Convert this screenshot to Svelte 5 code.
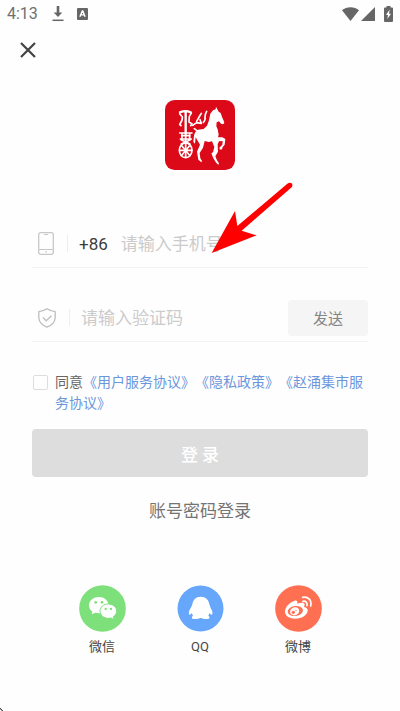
<script>
  let phone = $state('');
  let code = $state('');
  let agreed = $state(false);
</script>

<div class="page">
  <header class="status">
    <span class="time">4:13</span>
    <svg class="download" width="12" height="16" viewBox="0 0 12 16" aria-hidden="true">
      <path d="M4.700 0h2.600v6.500h3L6 11 1.700 6.500h3z" fill="#666" />
      <path d="M.5 14.300h11" stroke="#666" stroke-width="1.500" />
    </svg>
    <svg width="11" height="12" viewBox="0 0 11 12" aria-hidden="true">
      <rect width="11" height="12" rx="1" fill="#666" />
      <path d="M2.900 8.800 5.300 3h.5l2.300 5.800M3.800 6.900h3.500" fill="none" stroke="#fff" stroke-width="1.400" />
    </svg>
    <div class="signals">
      <svg width="17" height="14" viewBox="0 0 17 14" aria-hidden="true">
        <path d="M0 3.200C4.500-.9 12.500-.9 17 3.200L8.500 14z" fill="#666" />
      </svg>
      <svg width="14" height="14" viewBox="0 0 14 14" aria-hidden="true">
        <path d="M14 0v14H0z" fill="#666" />
      </svg>
      <svg class="battery" width="9" height="16" viewBox="0 0 9 16" aria-hidden="true">
        <path d="M2.500 0h4v1.500H8q1 0 1 1V15q0 1-1 1H1q-1 0-1-1V2.500q0-1 1-1h1.500z" fill="#666" />
        <path d="M5.700 3.500 2 9h2l-.7 4L7 7.700H5z" fill="#fff" />
      </svg>
    </div>
  </header>

  <button class="close" type="button" aria-label="关闭">
    <svg width="16" height="16" viewBox="0 0 16 16" aria-hidden="true">
      <path d="m1 1 14 14M15 1 1 15" stroke="#444" stroke-width="2.200" />
    </svg>
  </button>

  <svg class="logo" width="70" height="70" viewBox="15 15 210 210" aria-hidden="true">
    <rect x="15" y="15" width="210" height="210" rx="29" fill="#dc0a19" />
    <g transform="translate(36 21)">
      <path
        d="M132 14l-1 8-8 3-8 10-4 20-6 16-10 10-17 2-8 7-4 10-2 20 5 5 2-19 6 10 7 12-9 21 4 24 9 8 2-4-5-8-2-16 10-16 5-20 12 3 10-2 7 17-4 16-5 3 6 15 9 14 6 5 2-4-6-9-5-12 8-14-1-22 4-9 11-1-1 11-9 9 2 6 6-1 2-7 6-7 2-17-9-5-13 0 2-8-3-16-4-9 1-12 7-3 6 7 6 2 4-4-2-7-4-9-5-14-6-4z"
        fill="#fff"
      />
      <g fill="none" stroke="#fff" stroke-linecap="round" stroke-linejoin="round">
        <path d="M24 31q16-7 32 0M41 31v64" stroke-width="7" />
        <path d="M23 35l5 6M58 33l-4 7M31 44q1 13-8 23l4 4M52 43l-1 17 9 5-4 6" stroke-width="5" />
        <path d="M62 70l12-8 14 2-4-11M74 58l9-16 5-8M104 28q-5 8-5 17 2 9-5 16M67 80l11 8" stroke-width="5" />
        <path d="M23 93h37M25 111h33M30 94v18M53 94v18M29 101h25M27 113l27 13M55 113l-27 13M41 96v70" stroke-width="5" />
        <ellipse cx="41" cy="145" rx="19" ry="22" stroke-width="5" />
        <path d="M23 145h36M28 130l26 31M54 130l-26 31" stroke-width="5" />
      </g>
    </g>
  </svg>

  <form onsubmit={(e) => e.preventDefault()}>
    <div class="field">
      <label for="phone" aria-label="手机号">
        <svg width="16" height="23" viewBox="0 0 16 23" fill="none" stroke="#c8c8c8" aria-hidden="true">
          <rect x=".7" y=".7" width="14.600" height="21.600" rx="2" stroke-width="1.300" />
          <path d="M1 17.500h14M6 2.500h4M7 19.800h2" />
        </svg>
      </label>
      <span class="divider"></span>
      <span class="prefix">+86</span>
      <input id="phone" type="tel" placeholder="请输入手机号" bind:value={phone} />
    </div>

    <div class="field code">
      <label for="code" aria-label="验证码">
        <svg width="18" height="20" viewBox="0 0 18 20" fill="none" stroke="#bdbdbd" stroke-width="1.300" stroke-linejoin="round" aria-hidden="true">
          <path d="M9 .8Q12.500 3.300 17.200 3.600V10Q16.600 16 9 19.200 1.400 16 .8 10V3.600Q5.500 3.300 9 .8z" />
          <path d="m5 9.500 3.200 3.200 5.300-5" />
        </svg>
      </label>
      <span class="divider"></span>
      <input id="code" type="text" placeholder="请输入验证码" bind:value={code} />
      <button class="send" type="button">发送</button>
    </div>

    <div class="agreement">
      <input id="agree" type="checkbox" bind:checked={agreed} />
      <p><label for="agree">同意</label><a href="#service">《用户服务协议》</a><a href="#privacy">《隐私政策》</a><a href="#market">《赵涌集市服务协议》</a></p>
    </div>

    <button class="login" type="submit">登 录</button>
  </form>

  <a class="password" href="#password">账号密码登录</a>

  <nav class="social">
    <a href="#wechat">
      <svg width="47" height="47" viewBox="25 30 141 141" aria-hidden="true">
        <circle cx="95.500" cy="100.500" r="70" fill="#7de07b" />
        <path d="M84 66c-17 0-29 11-29 25 0 9 4 15 10 19l-2 8 11-5 10 2c17 0 29-11 29-25S101 66 84 66z" fill="#fff" />
        <path d="M113 87c-14 0-25 9-25 21s11 22 25 22l8-1 10 5-3-9c6-4 10-9 10-17 0-12-11-21-25-21z" fill="#fff" stroke="#7de07b" stroke-width="3" />
        <g fill="#7de07b"><circle cx="75" cy="82" r="4" /><circle cx="94" cy="82" r="4" /><circle cx="105" cy="102" r="3.500" /><circle cx="121" cy="102" r="3.500" /></g>
      </svg>
      <span>微信</span>
    </a>
    <a href="#qq">
      <svg width="47" height="47" viewBox="32 28 141 141" aria-hidden="true">
        <circle cx="102.500" cy="98.500" r="69" fill="#66a7fb" />
        <path d="M103 63c-15 0-23 10-25 23-1 5-3 7-5 11-5 8-7 16-4 20 2 1 5-2 7-5l4 8c-5 3-5 9 1 10 8 1 16 0 20-3h4c4 3 12 4 20 3 6-1 6-7 1-10l4-8c2 3 5 6 7 5 3-4 1-12-4-20l-4-11c-1-13-11-23-26-23z" fill="#fff" />
      </svg>
      <span>QQ</span>
    </a>
    <a href="#weibo">
      <svg width="47" height="47" viewBox="27 30 141 141" aria-hidden="true">
        <circle cx="97.500" cy="100.500" r="70" fill="#ff6f52" />
        <path d="M84 78c7-3 12 0 10 8 10-4 22-5 22 3l-2 7c8 2 12 6 11 12-2 13-18 23-37 23-18 0-31-9-31-21 0-13 13-27 27-32z" fill="#fff" />
        <ellipse cx="88" cy="108" rx="23" ry="15" transform="rotate(-7 88 108)" fill="#ff6f52" />
        <ellipse cx="86" cy="109" rx="14" ry="12" transform="rotate(-20 86 109)" fill="#fff" />
        <circle cx="82" cy="112" r="5" fill="#ff6f52" />
        <circle cx="90" cy="106" r="2" fill="#ff6f52" />
        <path d="M111 79c8-2 14 4 12 13M110 67c17-3 28 9 24 26" fill="none" stroke="#fff" stroke-width="5" stroke-linecap="round" />
      </svg>
      <span>微博</span>
    </a>
  </nav>

  <svg class="arrow" width="84" height="74" viewBox="570 36 252 222" aria-hidden="true">
    <path d="M575 249 645 123 652 168 802 41Q808 36 814 39 820 45 815 52L665 182 710 196z" fill="#f00" />
  </svg>
  <svg class="pointer" width="3" height="3" viewBox="0 0 3 3" aria-hidden="true">
    <path d="M0 0h1v1H0zM1 1h1v1H1zM2 2h1v1H2z" fill="#444" /><path d="M0 1h1v1H0zM1 2h1v1H1z" fill="#aaa" />
  </svg>
</div>

<style>
  :global(body) {
    margin: 0;
    background: #fefefe;
  }
  .page {
    position: relative;
    box-sizing: border-box;
    min-height: 100vh;
    display: flex;
    flex-direction: column;
    font-family: Roboto, "Noto Sans CJK SC", sans-serif;
    color: #3c3c3c;
    text-spacing-trim: space-all;
  }
  svg {
    display: block;
    flex: none;
  }
  button,
  input {
    font: inherit;
    border: 0;
    margin: 0;
    padding: 0;
    background: none;
  }
  a {
    text-decoration: none;
  }
  .status {
    display: flex;
    align-items: center;
    height: 27px;
    padding: 0 7px;
    color: #707070;
    font-size: 16px;
  }
  .download {
    margin: 0 13px 0 14px;
  }
  .signals {
    display: flex;
    align-items: center;
    gap: 2px;
    margin-left: auto;
  }
  .battery {
    margin-left: 7px;
  }
  .close {
    align-self: flex-start;
    padding: 15px 20px;
  }
  .logo {
    align-self: center;
    margin-top: 27px;
  }
  form {
    margin: 50px 32px 0;
  }
  .field {
    display: flex;
    align-items: center;
    height: 47px;
    border-bottom: 1px solid #f2f2f2;
    font-size: 17px;
  }
  .code {
    margin-top: 26px;
  }
  .field label {
    padding-left: 6px;
  }
  .divider {
    flex: none;
    width: 1px;
    height: 17px;
    margin: 0 11px 0 13px;
    background: #eee;
  }
  .prefix {
    margin-right: 13px;
  }
  .field input {
    flex: 1;
    min-width: 0;
    outline: 0;
    color: #3c3c3c;
  }
  .field input::placeholder {
    color: #cbcbcb;
    opacity: 1;
  }
  .send {
    width: 80px;
    height: 36px;
    border-radius: 4px;
    background: #f5f5f5;
    color: #858585;
    font-size: 15px;
  }
  .agreement {
    display: flex;
    align-items: flex-start;
    gap: 7px;
    margin-top: 30px;
    font-size: 14px;
    line-height: 21px;
  }
  .agreement input {
    appearance: none;
    flex: none;
    box-sizing: border-box;
    width: 15px;
    height: 15px;
    margin: 3px 0 0 1px;
    border: 1px solid #ddd;
    border-radius: 2px;
  }
  .agreement input:checked {
    background: #6b96dc;
  }
  .agreement p {
    margin: 0;
  }
  .agreement label {
    color: #666;
  }
  .agreement a {
    color: #6b96dc;
  }
  .login {
    width: 100%;
    height: 48px;
    margin-top: 15px;
    border-radius: 4px;
    background: #ddd;
    color: #fff;
    font-size: 17px;
    font-weight: 500;
  }
  .password {
    align-self: center;
    margin-top: 22px;
    color: #747474;
    font-size: 17px;
    line-height: 24px;
  }
  .social {
    display: flex;
    justify-content: center;
    margin-top: 62px;
  }
  .social a {
    display: flex;
    flex-direction: column;
    align-items: center;
    gap: 6px;
    width: 98px;
    color: #444;
    font-size: 13px;
    line-height: 18px;
  }
  .arrow {
    position: absolute;
    left: 210px;
    top: 182px;
  }
  .pointer {
    position: absolute;
    left: 0;
    bottom: 0;
  }
</style>
